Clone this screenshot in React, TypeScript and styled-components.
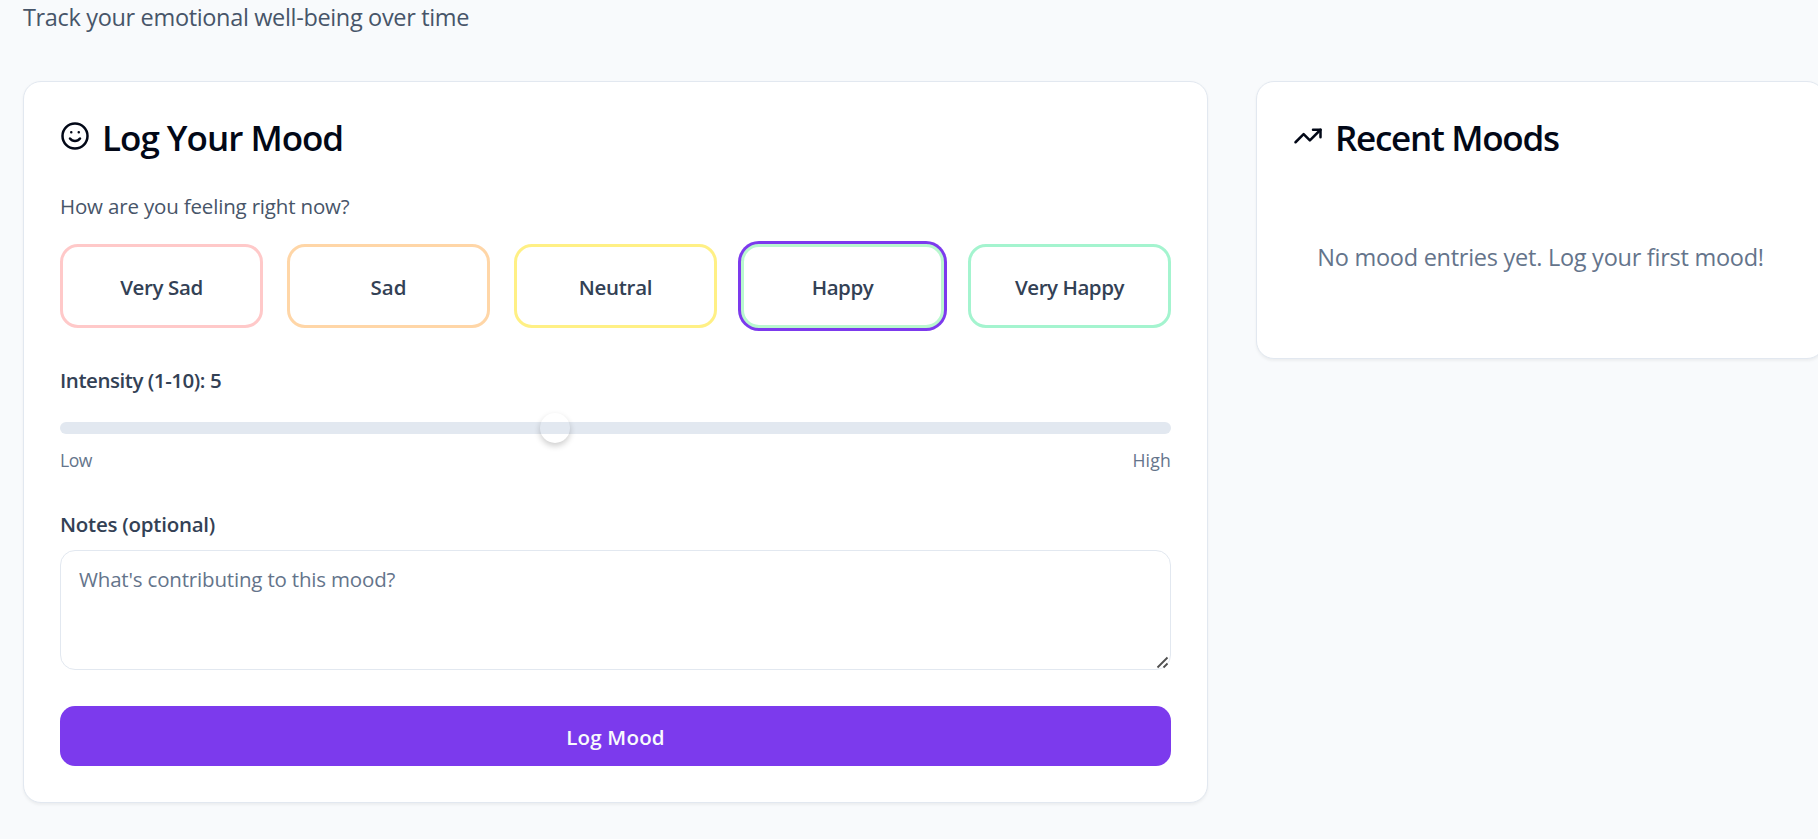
import React, { useState } from 'react';
import styled, { createGlobalStyle } from 'styled-components';

const GlobalStyle = createGlobalStyle`
  * { box-sizing: border-box; }
  html, body { margin: 0; padding: 0; overflow: hidden; background: #f8fafc; }
  body, button, textarea { font-family: "Open Sans", "Noto Sans", sans-serif; }
`;

const Page = styled.main`
  height: 100vh;
  overflow: hidden;
  padding-left: 23px;
  background: #f8fafc;
  color: #020817;
`;

const Subtitle = styled.p`
  margin: -1px 0 46px;
  font: 400 23.5px/36px "Open Sans", sans-serif;
  letter-spacing: -0.34px;
  color: #475569;
`;

const Columns = styled.div`
  display: grid;
  grid-template-columns: 1185px 569px;
  gap: 48px;
  align-items: start;
`;

const Card = styled.section`
  padding: 36px;
  border: 1px solid #e2e8f0;
  border-radius: 18px;
  background: #fff;
  box-shadow: 0 1.5px 3px rgba(0, 0, 0, 0.05);
`;

const CardTitle = styled.h2<{ $tracking: number }>`
  display: flex;
  align-items: flex-start;
  gap: 12px;
  height: 36px;
  margin: 0 0 36px;
  font-size: 35px;
  font-weight: 600;
  line-height: 40px;
  letter-spacing: ${(p) => p.$tracking}px;
  white-space: nowrap;
`;

const TitleIcon = styled.svg`
  width: 30px;
  height: 30px;
  margin-top: 3px;
  flex: none;
  fill: none;
  stroke: currentColor;
  stroke-width: 2;
  stroke-linecap: round;
  stroke-linejoin: round;
`;

const Question = styled.p`
  margin: 0 0 24px;
  padding-top: 1px;
  font: 400 20.5px/30px "Open Sans", sans-serif;
  height: 30px;
  letter-spacing: -0.17px;
  color: #475569;
`;

const MoodGrid = styled.div`
  display: grid;
  grid-template-columns: repeat(5, 1fr);
  gap: 24px;
  margin-bottom: 37px;
`;

const MoodButton = styled.button<{ $tone: string; $selected: boolean; $tracking: number }>`
  height: 84px;
  padding: 2px 0 0;
  border: 3px solid ${(p) => p.$tone};
  border-radius: 18px;
  background: #fff;
  box-shadow: ${(p) => (p.$selected ? '0 0 0 3px #7c3aed' : 'none')};
  font-size: 20.5px;
  font-weight: 600;
  letter-spacing: ${(p) => p.$tracking}px;
  color: #334155;
`;

const Label = styled.label<{ $tracking: number }>`
  display: block;
  font-size: 20.5px;
  font-weight: 600;
  line-height: 30px;
  letter-spacing: ${(p) => p.$tracking}px;
  color: #334155;
`;

const Track = styled.div`
  position: relative;
  height: 12px;
  margin: 27px 0 14px;
  border-radius: 6px;
  background: #e2e8f0;
`;

const Thumb = styled.span`
  position: absolute;
  top: -9px;
  width: 30px;
  height: 30px;
  border-radius: 50%;
  box-shadow: 0 3px 6px rgba(0, 0, 0, 0.2);
`;

const RangeEnds = styled.div`
  display: flex;
  justify-content: space-between;
  margin-bottom: 37px;
  font: 400 17.6px/24px "Open Sans", sans-serif;
  color: #64748b;
`;

const RangeEnd = styled.span<{ $tracking: number }>`
  letter-spacing: ${(p) => p.$tracking}px;
`;

const NotesField = styled.div`
  position: relative;
  height: 120px;
  margin: 11px 0 36px;
`;

const NotesInput = styled.textarea`
  display: block;
  width: 100%;
  height: 120px;
  padding: 13px 18px;
  border: 1px solid #e2e8f0;
  border-radius: 15px;
  outline: none;
  resize: none;
  background: #fff;
  font: 400 20.5px/30px "Open Sans", sans-serif;
  letter-spacing: -0.18px;
  &::placeholder { color: #64748b; opacity: 1; }
`;

const ResizeGrip = styled.svg`
  position: absolute;
  right: 2px;
  bottom: 1px;
  width: 13px;
  height: 13px;
  stroke: #505050;
  stroke-width: 1.8;
`;

const SubmitButton = styled.button`
  display: block;
  width: 100%;
  height: 60px;
  padding: 2px 0 0;
  border: 0;
  border-radius: 15px;
  background: #7c3aed;
  color: #f8fafc;
  font-size: 20.5px;
  font-weight: 600;
  letter-spacing: 0.2px;
`;

const EmptyState = styled.p`
  margin: 0;
  padding: 49px 0 47px;
  text-align: center;
  white-space: nowrap;
  font: 400 23.5px/36px "Open Sans", sans-serif;
  letter-spacing: -0.26px;
  color: #64748b;
`;

const MOODS = [
  { name: 'Very Sad', tone: '#ffc9c9', tracking: -0.37 },
  { name: 'Sad', tone: '#ffd6a7', tracking: 0 },
  { name: 'Neutral', tone: '#fff085', tracking: -0.3 },
  { name: 'Happy', tone: '#b9f8cf', tracking: -0.45 },
  { name: 'Very Happy', tone: '#a4f4cf', tracking: -0.45 },
];

export default function App() {
  const [mood, setMood] = useState('Happy');
  const [notes, setNotes] = useState('');
  const intensity = 5;
  const fraction = (intensity - 1) / 9;

  return (
    <Page>
      <GlobalStyle />
      <Subtitle>Track your emotional well-being over time</Subtitle>
      <Columns>
        <Card>
          <CardTitle $tracking={-1}>
            <TitleIcon viewBox="0 0 24 24">
              <circle cx="12" cy="12" r="10" />
              <path d="M8 14s1.5 2 4 2 4-2 4-2M9 9h.01M15 9h.01" />
            </TitleIcon>
            Log Your Mood
          </CardTitle>
          <Question>How are you feeling right now?</Question>
          <MoodGrid>
            {MOODS.map((m) => (
              <MoodButton
                key={m.name}
                $tone={m.tone}
                $tracking={m.tracking}
                $selected={m.name === mood}
                onClick={() => setMood(m.name)}
              >
                {m.name}
              </MoodButton>
            ))}
          </MoodGrid>
          <Label $tracking={-0.45}>Intensity (1-10): {intensity}</Label>
          <Track>
            <Thumb style={{ left: `calc((100% - 30px) * ${fraction})` }} />
          </Track>
          <RangeEnds>
            <RangeEnd $tracking={-0.5}>Low</RangeEnd>
            <RangeEnd $tracking={0.2}>High</RangeEnd>
          </RangeEnds>
          <Label $tracking={-0.25} htmlFor="notes">Notes (optional)</Label>
          <NotesField>
            <NotesInput
              id="notes"
              placeholder="What's contributing to this mood?"
              value={notes}
              onChange={(e) => setNotes(e.target.value)}
            />
            <ResizeGrip viewBox="0 0 13 13">
              <path d="M1.5 11.5L11.5 1.5M7.5 11.5L11.5 7.5" />
            </ResizeGrip>
          </NotesField>
          <SubmitButton>Log Mood</SubmitButton>
        </Card>
        <Card>
          <CardTitle $tracking={-1.28}>
            <TitleIcon viewBox="0 0 24 24">
              <path d="M22 7l-8.5 8.5-5-5L2 17" />
              <path d="M16 7h6v6" />
            </TitleIcon>
            Recent Moods
          </CardTitle>
          <EmptyState>No mood entries yet. Log your first mood!</EmptyState>
        </Card>
      </Columns>
    </Page>
  );
}
